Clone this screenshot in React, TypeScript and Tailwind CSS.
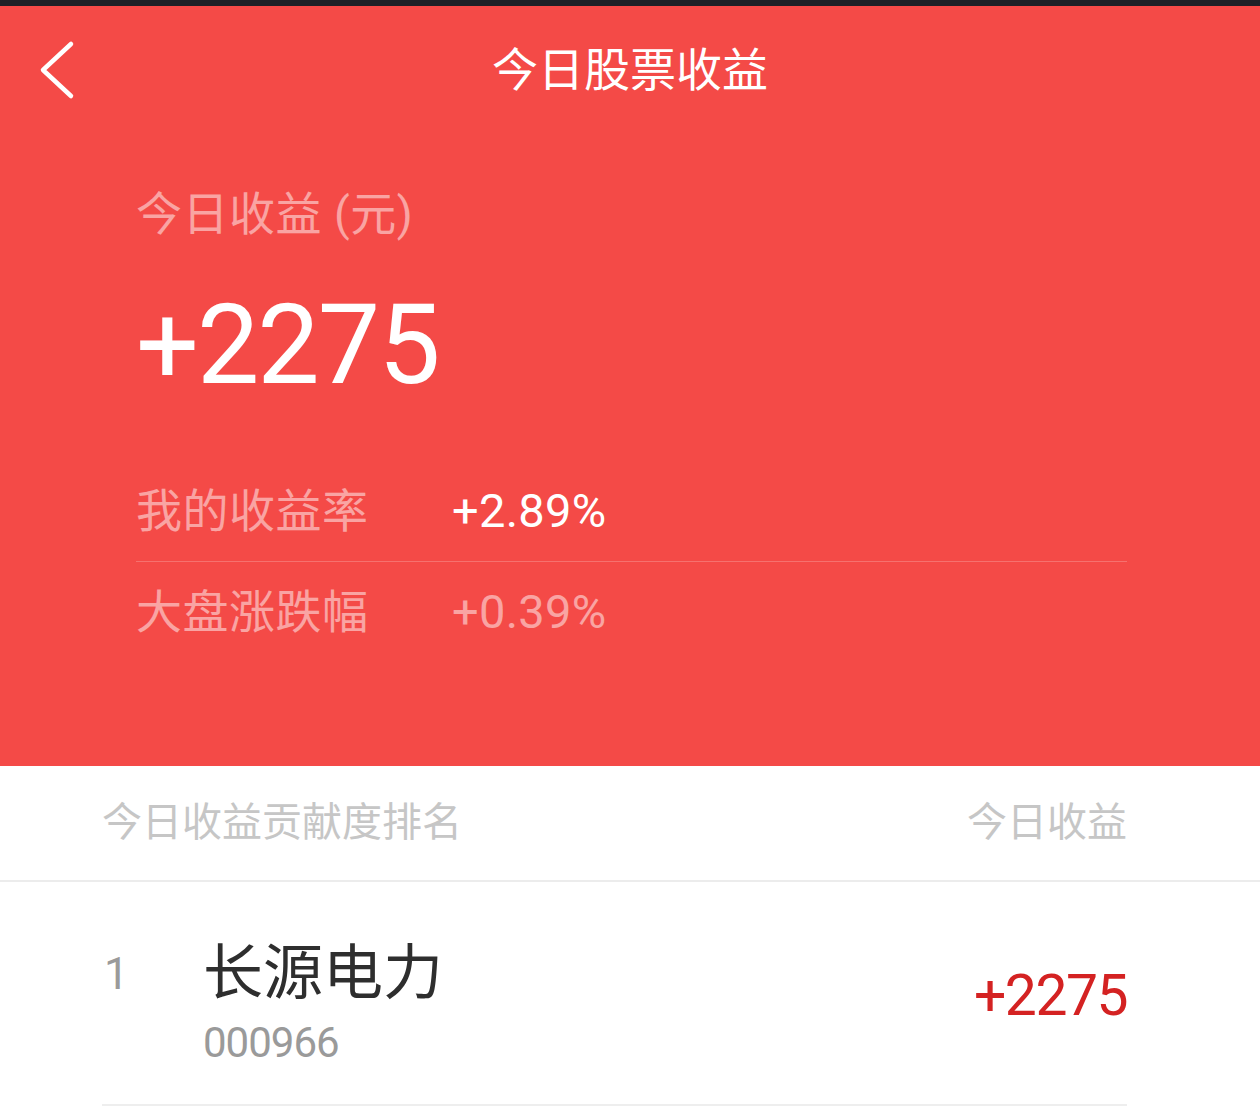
import React from 'react'

const stats = [
  { label: '我的收益率', value: '+2.89%', bright: true },
  { label: '大盘涨跌幅', value: '+0.39%', bright: false },
]

function BackIcon() {
  return (
    <svg
      viewBox="0 0 40 60"
      className="absolute left-[36px] top-[34px] h-[60px] w-[40px]"
      fill="none"
      stroke="white"
      strokeWidth="4.5"
      strokeLinecap="round"
      strokeLinejoin="round"
    >
      <path d="M35 4 L7 30 L35 56" />
    </svg>
  )
}

export default function App() {
  return (
    <div className="h-[1113px] w-[1260px] overflow-hidden bg-white font-['Roboto','Noto_Sans_CJK_SC',sans-serif]">
      {/* status strip */}
      <div className="h-[6px] bg-[#1d2127]" />

      {/* red summary */}
      <div className="flex h-[760px] flex-col bg-[#f44a47]">
        <header className="relative flex h-[128px] items-center justify-center">
          <BackIcon />
          <h1 className="text-[46px] leading-none text-white">今日股票收益</h1>
        </header>

        <div className="pl-[136px] pr-[133px]">
          <div className="mt-[52px] h-[56px] text-[46px] leading-[56px] tracking-[0.5px] text-white/50">
            今日收益 (元)
          </div>
          <div className="mt-[43px] h-[120px] text-[111px] leading-[120px] tracking-[-2px] text-white">
            +2275
          </div>
          <div className="mt-[57px]">
            {stats.map((s, i) => (
              <div
                key={s.label}
                className={
                  'flex h-[100px] items-center ' +
                  (i === 0 ? 'border-b border-[#f6716e]' : '')
                }
              >
                <span className="w-[316px] text-[46px] tracking-[0.5px] text-white/50">{s.label}</span>
                <span
                  className={
                    'text-[47px] tracking-[0.3px] ' +
                    (s.bright ? 'text-white' : 'text-white/50')
                  }
                >
                  {s.value}
                </span>
              </div>
            ))}
          </div>
        </div>
      </div>

      {/* ranking header */}
      <div className="flex h-[116px] items-center justify-between border-b-2 border-[#ececec] pl-[102px] pr-[133px] text-[40px] text-[#c6c6c6]">
        <span>今日收益贡献度排名</span>
        <span>今日收益</span>
      </div>

      {/* ranking list */}
      <div className="mx-[102px] w-[1025px]">
        <div className="flex h-[224px] items-start border-b-2 border-[#eeeeee]">
          <span className="mt-[66px] h-[52px] w-[101px] pl-[2px] text-[44px] leading-[52px] text-[#9a9a9a]">1</span>
          <div className="mt-[57px] flex flex-1 flex-col">
            <span className="h-[70px] text-[60px] leading-[70px] text-[#2e2e2e]">长源电力</span>
            <span className="mt-[10px] h-[48px] text-[42px] leading-[48px] tracking-[-1px] text-[#9a9a9a]">
              000966
            </span>
          </div>
          <span className="mt-[81px] h-[66px] text-[57px] leading-[66px] tracking-[-1.5px] text-[#d42222]">+2275</span>
        </div>
      </div>
    </div>
  )
}
